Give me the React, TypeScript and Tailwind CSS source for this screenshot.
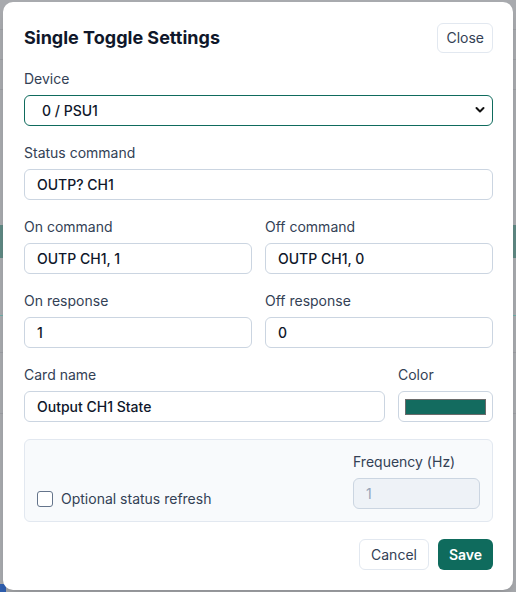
import React from 'react';

const inputCls =
  'h-[31px] w-full rounded-md border border-[#cbd5e1] bg-white px-3 text-sm font-medium text-[#0f172a] outline-none';
const labelCls = 'mb-[6px] block text-sm leading-5 text-[#334155]';

function Field({ label, value }: { label: string; value: string }) {
  return (
    <div className="min-w-0 flex-1">
      <label className={labelCls}>{label}</label>
      <input className={inputCls} defaultValue={value} />
    </div>
  );
}

export default function App() {
  return (
    <div
      className="relative h-[592px] w-[516px] overflow-hidden bg-[#a8aaae]"
      style={{ fontFamily: 'Inter, "Noto Sans", sans-serif' }}
    >
      {/* page behind the backdrop */}
      <div className="flex h-full flex-col">
        <div className="h-[30px] border-b border-[#9c9ea3]" />
        <div className="h-[30px] border-b border-[#9c9ea3]" />
        <div className="h-[30px] border-b border-[#9c9ea3]" />
        <div className="mt-[135px] h-[33px] bg-[#5f8984]" />
        <div className="mt-[57px] h-[1px] bg-[#6fb0aa]" />
        <div className="mt-[36px] h-[1px] bg-[#9c9ea3]" />
        <div className="mt-[60px] h-[1px] bg-[#9c9ea3]" />
        <div className="mt-auto h-[8px] w-[6px] bg-[#2f5fb0]" />
      </div>

      {/* modal */}
      <div className="absolute left-[3px] top-[2px] flex h-[588px] w-[510px] flex-col rounded-[10px] bg-white pl-[21px] pr-[20px] pt-[21px] shadow-lg">
        <div className="flex h-[30px] items-center justify-between">
          <h2 className="text-lg font-bold text-[#0f172a]">Single Toggle Settings</h2>
          <button className="h-[30px] rounded-md border border-[#e2e8f0] px-[8px] text-sm text-[#334155]">
            Close
          </button>
        </div>

        <div className="mt-4 flex flex-col gap-[17px]">
          <div>
            <label className={labelCls}>Device</label>
            <div className="relative">
              <select className="h-[31px] w-full appearance-none rounded-md border border-[#0f6b5d] bg-white pl-[17px] text-sm font-medium text-[#0f172a] outline-none">
                <option>0 / PSU1</option>
              </select>
              <svg
                className="pointer-events-none absolute right-[8px] top-[11px]"
                width="10"
                height="8"
                viewBox="0 0 10 8"
              >
                <path d="M1.5 2 L5 5.5 L8.5 2" fill="none" stroke="#111" strokeWidth="2" strokeLinecap="round" strokeLinejoin="round" />
              </svg>
            </div>
          </div>

          <Field label="Status command" value="OUTP? CH1" />

          <div className="flex gap-[13px]">
            <Field label="On command" value="OUTP CH1, 1" />
            <Field label="Off command" value="OUTP CH1, 0" />
          </div>

          <div className="flex gap-[13px]">
            <Field label="On response" value="1" />
            <Field label="Off response" value="0" />
          </div>

          <div className="flex gap-[13px]">
            <Field label="Card name" value="Output CH1 State" />
            <div className="w-[95px] shrink-0">
              <label className={labelCls}>Color</label>
              <div className="flex h-[31px] items-center rounded-md border border-[#cbd5e1] bg-white px-[6px]">
                <div className="h-[16px] w-full border border-[#6b6b6b] bg-[#136b5f]" />
              </div>
            </div>
          </div>
        </div>

        <div className="mt-[17px] flex items-end justify-between rounded-md border border-[#e2e8f0] bg-[#f8fafc] px-3 pb-3 pt-3">
          <label className="flex h-5 items-center gap-[8px] text-sm text-[#334155]">
            <span className="h-[16px] w-[16px] rounded-[3px] border border-[#64748b] bg-white" />
            Optional status refresh
          </label>
          <div className="w-[127px]">
            <label className={labelCls}>Frequency (Hz)</label>
            <input
              disabled
              className="h-[31px] w-full rounded-md border border-[#cbd5e1] bg-[#eef2f7] px-3 text-sm text-[#94a3b8] outline-none"
              defaultValue="1"
            />
          </div>
        </div>

        <div className="mt-[17px] flex justify-end gap-[9px]">
          <button className="h-[31px] w-[70px] rounded-md border border-[#e2e8f0] bg-white text-sm text-[#334155]">
            Cancel
          </button>
          <button className="h-[31px] w-[55px] rounded-md bg-[#0f6b5d] text-sm font-semibold text-white">
            Save
          </button>
        </div>
      </div>
    </div>
  );
}
